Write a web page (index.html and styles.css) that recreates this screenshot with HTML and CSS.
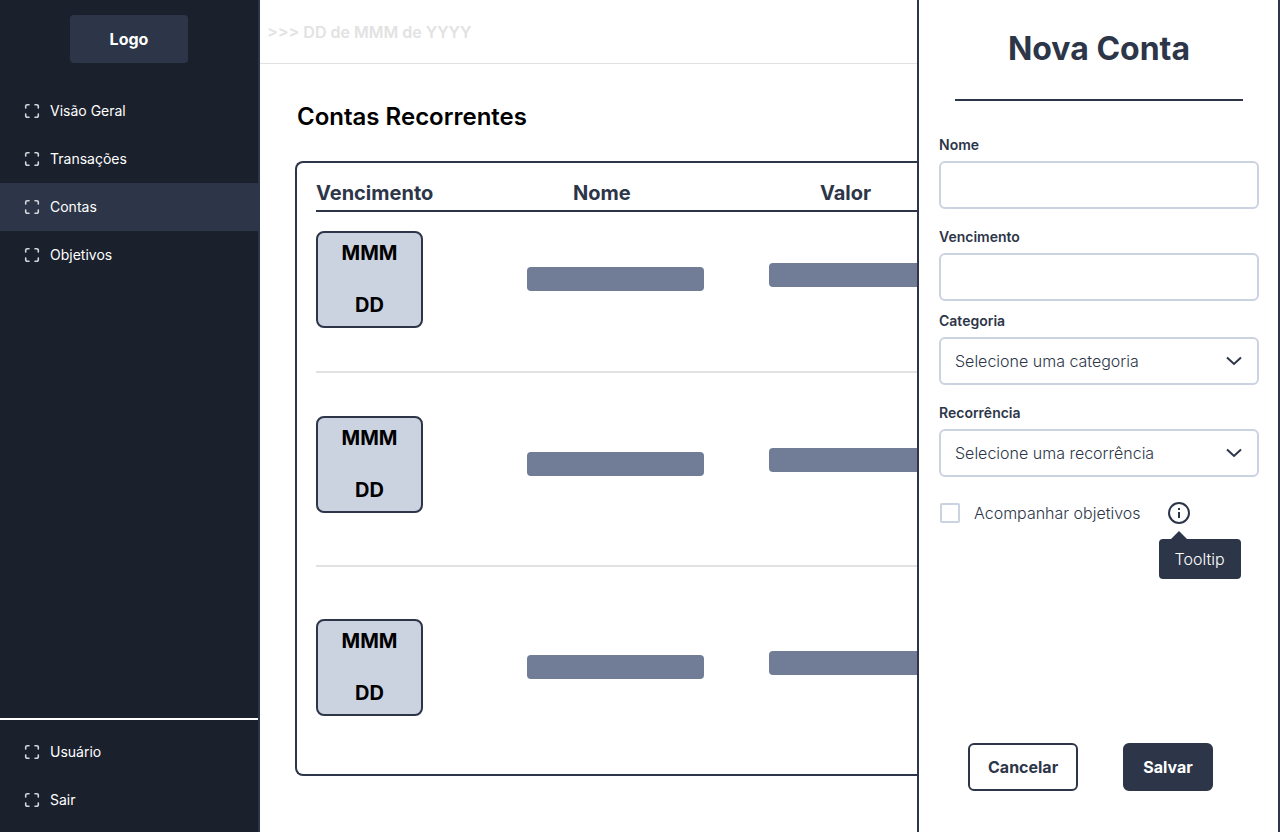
FILE: index.html
```html
<!DOCTYPE html>
<html lang="pt-BR">
<head>
<meta charset="utf-8">
<meta name="viewport" content="width=device-width, initial-scale=1">
<title>Contas Recorrentes</title>
<link rel="stylesheet" href="styles.css">
</head>
<body>
<svg class="symbols" aria-hidden="true">
  <symbol id="corners" viewBox="0 0 16 16">
    <path d="M1.700 5V3.200a1.500 1.500 0 0 1 1.500-1.500H5M11 1.700h1.800a1.500 1.500 0 0 1 1.500 1.500V5M14.300 11v1.800a1.500 1.500 0 0 1-1.500 1.500H11M5 14.300H3.200a1.500 1.500 0 0 1-1.500-1.500V11"/>
  </symbol>
  <symbol id="chevron" viewBox="0 0 24 24">
    <path d="M5 8.500 12 15l7-6.500"/>
  </symbol>
</svg>
<div class="app">
  <aside class="sidebar">
    <a class="logo" href="#">Logo</a>
    <nav class="menu" aria-label="Principal">
      <a class="item" href="#"><svg class="icon"><use href="#corners"/></svg>Visão Geral</a>
      <a class="item" href="#"><svg class="icon"><use href="#corners"/></svg>Transações</a>
      <a class="item active" href="#" aria-current="page"><svg class="icon"><use href="#corners"/></svg>Contas</a>
      <a class="item" href="#"><svg class="icon"><use href="#corners"/></svg>Objetivos</a>
    </nav>
    <nav class="menu account" aria-label="Usuário">
      <a class="item" href="#"><svg class="icon"><use href="#corners"/></svg>Usuário</a>
      <a class="item" href="#"><svg class="icon"><use href="#corners"/></svg>Sair</a>
    </nav>
  </aside>

  <main class="main">
    <header class="topbar">&gt;&gt;&gt; DD de MMM de YYYY</header>
    <section class="content">
      <h1 class="title">Contas Recorrentes</h1>
      <div class="card">
        <table class="bills">
          <thead>
            <tr><th class="col-date">Vencimento</th><th class="col-name">Nome</th><th class="col-value">Valor</th></tr>
          </thead>
          <tbody>
            <tr>
              <td><div class="date"><span>MMM</span><span>DD</span></div></td>
              <td><div class="bar bar-name"></div></td>
              <td><div class="bar bar-value"></div></td>
            </tr>
            <tr>
              <td><div class="date"><span>MMM</span><span>DD</span></div></td>
              <td><div class="bar bar-name"></div></td>
              <td><div class="bar bar-value"></div></td>
            </tr>
            <tr>
              <td><div class="date"><span>MMM</span><span>DD</span></div></td>
              <td><div class="bar bar-name"></div></td>
              <td><div class="bar bar-value"></div></td>
            </tr>
          </tbody>
        </table>
      </div>
    </section>
  </main>

  <form class="panel">
    <h2 class="panel-title">Nova Conta</h2>
    <div class="fields">
      <div class="field">
        <label for="nome">Nome</label>
        <input class="control" id="nome" type="text">
      </div>
      <div class="field">
        <label for="vencimento">Vencimento</label>
        <input class="control" id="vencimento" type="text">
      </div>
    </div>
    <div class="fields">
      <div class="field">
        <label for="categoria">Categoria</label>
        <div class="select">
          <select class="control" id="categoria"><option>Selecione uma categoria</option></select>
          <svg class="chevron" aria-hidden="true"><use href="#chevron"/></svg>
        </div>
      </div>
      <div class="field">
        <label for="recorrencia">Recorrência</label>
        <div class="select">
          <select class="control" id="recorrencia"><option>Selecione uma recorrência</option></select>
          <svg class="chevron" aria-hidden="true"><use href="#chevron"/></svg>
        </div>
      </div>
    </div>
    <div class="goals">
      <input class="check" id="objetivos" type="checkbox">
      <label class="goals-label" for="objetivos">Acompanhar objetivos</label>
      <button class="info" type="button" aria-label="Informações" aria-describedby="dica">
        <svg viewBox="0 0 24 24" aria-hidden="true"><circle cx="12" cy="12" r="10"/><path d="M12 11v6"/><path d="M12 7v2"/></svg>
        <span class="tooltip" id="dica" role="tooltip">Tooltip</span>
      </button>
    </div>
    <div class="actions">
      <button class="button secondary" type="button">Cancelar</button>
      <button class="button primary" type="submit">Salvar</button>
    </div>
  </form>
</div>
</body>
</html>
```

FILE: styles.css
```css
:root {
  --ink: #2d3648;
  --night: #1a202c;
  --mist: #cbd2e0;
  --slate: #717d96;
  --line: #e2e2e2;
}

* {
  box-sizing: border-box;
}

body {
  margin: 0;
  font-family: Inter, "Liberation Sans", sans-serif;
  font-size: 16px;
  line-height: 24px;
  color: var(--ink);
  background: #fff;
}

input,
select,
button {
  font: inherit;
  color: inherit;
}

.symbols {
  display: none;
}

.app {
  display: grid;
  grid-template-columns: 260px minmax(0, 1fr) 363px;
  min-height: 100vh;
}

/* Sidebar */
.sidebar {
  display: flex;
  flex-direction: column;
  padding-top: 15px;
  background: var(--night);
  border-right: 2px solid var(--ink);
  color: #fff;
}

.logo {
  align-self: center;
  margin-bottom: 24px;
  padding: 12px 40px;
  border-radius: 4px;
  background: var(--ink);
  color: #fff;
  font-weight: 700;
  text-decoration: none;
}

.item {
  display: flex;
  align-items: center;
  gap: 10px;
  height: 48px;
  padding: 0 24px;
  color: #fff;
  font-size: 14px;
  font-weight: 400;
  text-decoration: none;
}

.item.active {
  background: var(--ink);
}

.icon {
  width: 16px;
  height: 16px;
  fill: none;
  stroke: #d5d6d9;
  stroke-width: 1.6;
  stroke-linecap: round;
}

.account {
  margin-top: auto;
  padding: 8px 0;
  border-top: 2px solid #fff;
}

/* Main area */
.main {
  overflow: hidden;
}

.topbar {
  padding: 20px 7px 19px;
  border-bottom: 1px solid var(--line);
  color: var(--line);
  font-weight: 600;
}

.content {
  padding: 37px 0 56px 35px;
}

.title {
  margin: 0 0 28px 2px;
  color: #000;
  font-size: 24px;
  font-weight: 600;
  line-height: 32px;
}

.card {
  padding: 16px 0 6px 19px;
  border: 2px solid var(--ink);
  border-right: 0;
  border-radius: 8px 0 0 8px;
}

.bills {
  width: 100%;
  table-layout: fixed;
  border-collapse: separate;
  border-spacing: 0;
}

.bills th {
  padding: 0 0 3px;
  border-bottom: 2px solid var(--ink);
  font-size: 20px;
  font-weight: 700;
  line-height: 28px;
  text-align: left;
}

.bills .col-date {
  width: 211px;
}

.bills .col-name {
  width: 242px;
  padding-left: 46px;
}

.bills .col-value {
  padding-left: 51px;
}

.bills td {
  padding: 19px 0 43px;
  border-bottom: 2px solid var(--line);
}

.bills tr:nth-child(2) td {
  padding: 43px 0 52px;
}

.bills tr:last-child td {
  padding: 52px 0;
  border-bottom: 0;
}

.date {
  display: flex;
  flex-direction: column;
  justify-content: space-between;
  align-items: center;
  width: 107px;
  height: 97px;
  padding: 6px 0 7px;
  border: 2px solid var(--ink);
  border-radius: 8px;
  background: var(--mist);
  color: #000;
  font-size: 20px;
  font-weight: 700;
  line-height: 28px;
}

.bar {
  height: 24px;
  border-radius: 4px;
  background: var(--slate);
}

.bar-name {
  width: 177px;
  margin-bottom: 2px;
}

.bar-value {
  margin-bottom: 10px;
  border-radius: 4px 0 0 4px;
}

/* New bill panel */
.panel {
  display: flex;
  flex-direction: column;
  padding: 29px 19px 41px 20px;
  border: solid var(--ink);
  border-width: 0 2px;
}

.panel-title {
  margin: 0 16px 34px;
  padding-bottom: 30px;
  border-bottom: 2px solid var(--ink);
  font-size: 32px;
  font-weight: 700;
  line-height: 40px;
  text-align: center;
}

.fields {
  display: flex;
  flex-direction: column;
  gap: 18px;
  margin-bottom: 10px;
}

.field label {
  display: block;
  margin-bottom: 6px;
  font-size: 14px;
  font-weight: 600;
  line-height: 20px;
}

.control {
  display: block;
  width: 100%;
  height: 48px;
  padding: 0 14px;
  border: 2px solid var(--mist);
  border-radius: 6px;
  background: #fff;
  font-weight: 300;
  appearance: none;
}

.select {
  position: relative;
}

.chevron {
  position: absolute;
  top: 12px;
  right: 13px;
  width: 24px;
  height: 24px;
  fill: none;
  stroke: var(--ink);
  stroke-width: 2;
  pointer-events: none;
}

.goals {
  display: flex;
  align-items: center;
  margin-top: 14px;
  font-weight: 300;
}

.check {
  appearance: none;
  width: 20px;
  height: 20px;
  margin: 0 14px 0 1px;
  border: 2px solid var(--mist);
  border-radius: 2px;
}

.check:checked {
  background: var(--ink);
}

.info {
  position: relative;
  width: 24px;
  height: 24px;
  margin-left: 26px;
  padding: 0;
  border: 0;
  background: none;
}

.info svg {
  display: block;
  fill: none;
  stroke: var(--ink);
  stroke-width: 2;
}

.tooltip {
  position: absolute;
  top: 38px;
  left: -8px;
  padding: 8px 16px;
  border-radius: 4px;
  background: var(--ink);
  color: #fff;
}

.tooltip::before {
  content: "";
  position: absolute;
  top: -8px;
  left: 12px;
  border: solid transparent;
  border-width: 0 8px 8px;
  border-bottom-color: var(--ink);
}

.actions {
  display: flex;
  gap: 45px;
  margin-top: auto;
  padding-left: 29px;
}

.button {
  padding: 10px 18px;
  border: 2px solid var(--ink);
  border-radius: 6px;
  background: #fff;
  font-weight: 700;
}

.primary {
  background: var(--ink);
  color: #fff;
}
```
